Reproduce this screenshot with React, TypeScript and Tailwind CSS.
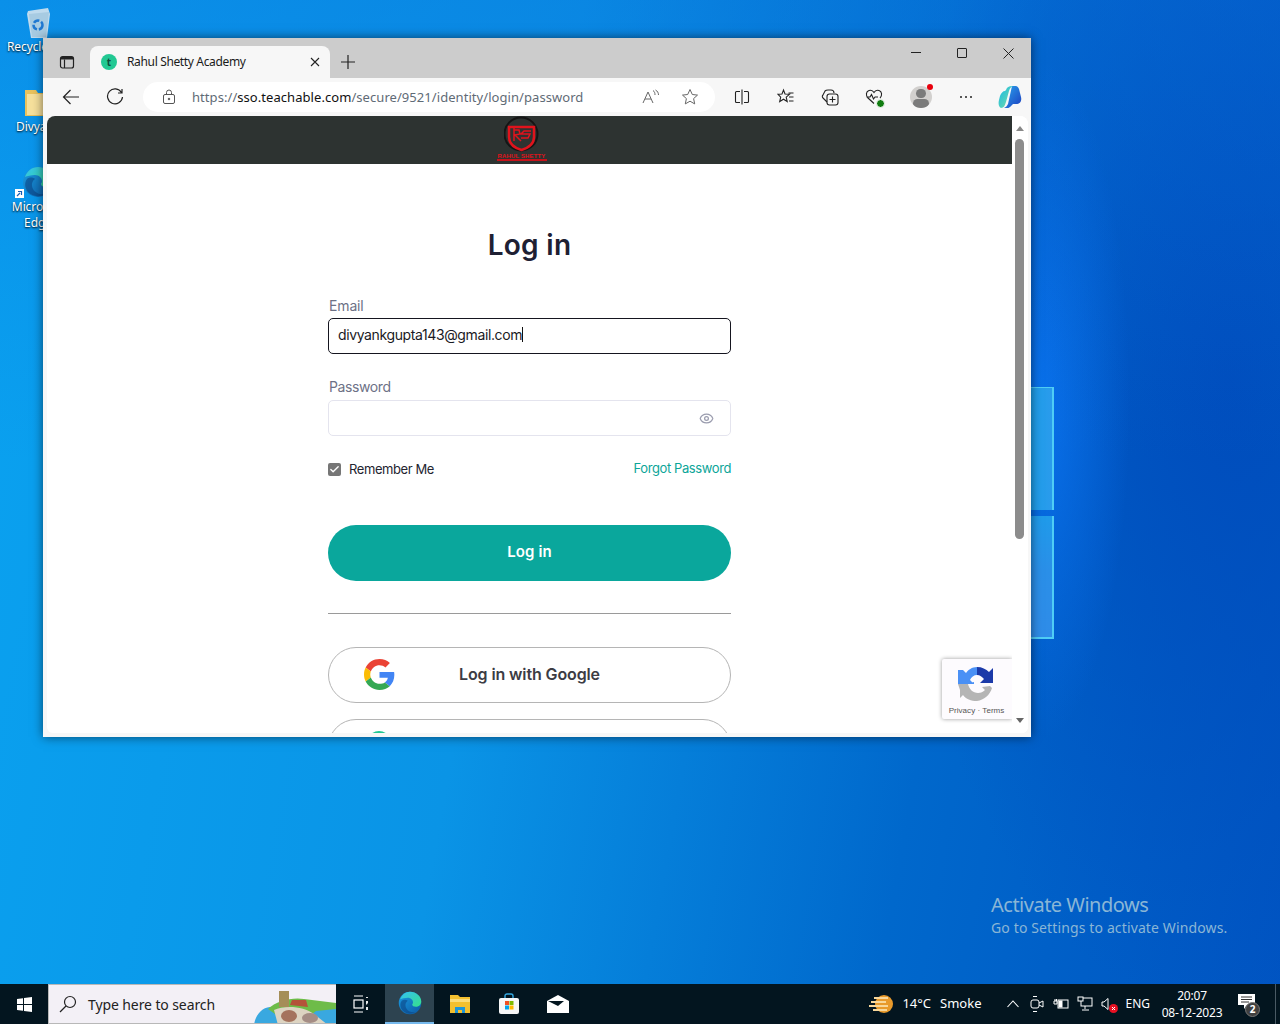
import React from 'react';
import { Eye, Check } from 'lucide-react';

const ui = "font-['Noto_Sans','Open_Sans',sans-serif]";
const form = "font-['Inter','Liberation_Sans',sans-serif]";

const Google = ({ size }: { size: number }) => (
  <svg width={size} height={size} viewBox="0 0 48 48">
    <path fill="#EA4335" d="M24 9.500c3.500 0 6.700 1.200 9.200 3.600l6.900-6.900C35.900 2.400 30.500 0 24 0 14.600 0 6.500 5.400 2.600 13.200l8 6.200C12.500 13.600 17.800 9.500 24 9.500z" />
    <path fill="#4285F4" d="M47 24.500c0-1.600-.1-3.100-.4-4.500H24v9h12.900c-.6 3-2.200 5.500-4.700 7.200l7.700 6C44.400 37.800 47 31.700 47 24.500z" />
    <path fill="#FBBC05" d="M10.500 28.600c-.5-1.400-.8-3-.8-4.600s.3-3.200.8-4.600l-8-6.200C.9 16.500 0 20.100 0 24s.9 7.500 2.600 10.800l7.900-6.200z" />
    <path fill="#34A853" d="M24 48c6.500 0 11.900-2.100 15.900-5.800l-7.700-6c-2.200 1.500-4.900 2.300-8.200 2.300-6.200 0-11.500-4.200-13.400-9.800l-8 6.200C6.500 42.600 14.600 48 24 48z" />
  </svg>
);

const Edge = ({ size, id }: { size: number; id: string }) => (
  <svg width={size} height={size} viewBox="0 0 32 32">
    <defs>
      <linearGradient id={`${id}A`} x1="0" y1="0" x2="1" y2="1">
        <stop offset="0" stopColor="#35c1f1" />
        <stop offset="1" stopColor="#36e08a" />
      </linearGradient>
      <linearGradient id={`${id}B`} x1="0" y1="0" x2="1" y2="1">
        <stop offset="0" stopColor="#1b9de2" />
        <stop offset="1" stopColor="#0c59a4" />
      </linearGradient>
    </defs>
    <circle cx="16" cy="16" r="15" fill={`url(#${id}B)`} />
    <path fill={`url(#${id}A)`} d="M3 11C5 5 10 1 16 1c8 0 15 6 15 13 0 4-3 7-7 7-3 0-5-1-5-3 0-1 1-1 1-3 0-3-3-6-7-6-4 0-8 1-10 2z" />
    <path fill="#0b3f80" d="M13 13c-3 2-4 6-2 10 2 4 7 6 12 5-6 4-13 2-17-2C3 22 2 17 5 13c2-2 6-2 8 0z" opacity=".55" />
  </svg>
);

const DesktopIcon = ({ top, label, children }: { top: number; label: string; children: React.ReactNode }) => (
  <div className="absolute left-[3px] w-[70px] flex flex-col items-center text-white text-[12px] leading-[16px]" style={{ top }}>
    {children}
    <span className={`${ui} text-center tracking-[-0.1px] [text-shadow:0_1px_2px_#000]`}>{label}</span>
  </div>
);

const Desktop = () => (
  <>
    <DesktopIcon top={6} label="Recycle Bin">
      <svg width="30" height="33" viewBox="0 0 30 33">
        <path d="M5 5l20-3 2 6-3 24H8L4 8z" fill="#c9dfee" opacity=".95" />
        <path d="M6 8l20-2-3 25H9z" fill="#a7cbe2" />
        <circle cx="15" cy="19" r="4.500" fill="none" stroke="#1f78d1" strokeWidth="2.500" strokeDasharray="6 2" />
      </svg>
    </DesktopIcon>
    <DesktopIcon top={88} label="Divyank">
      <svg width="32" height="31" viewBox="0 0 32 31">
        <path d="M3 2h11l2 3h13v23H3z" fill="#e9c25d" />
        <path d="M5 6h22v21H5z" fill="#f6e09c" />
      </svg>
    </DesktopIcon>
    <DesktopIcon top={166} label="Microsoft Edge">
      <div className="relative w-[32px] h-[33px]">
        <Edge size={32} id="deskEdge" />
        <svg className="absolute left-[-7px] bottom-[1px]" width="9" height="9" viewBox="0 0 9 9">
          <rect width="9" height="9" fill="#fff" />
          <path d="M2 7l3-3M3 2.500h3.500V6" fill="none" stroke="#1a5fb4" strokeWidth="1.200" />
        </svg>
      </div>
    </DesktopIcon>
  </>
);

const Wallpaper = () => (
  <div className="absolute left-[1031px] top-[387px] w-[23px] h-[252px] flex flex-col gap-[6px]">
    <div className="h-[123px] border-t border-r-2 border-[#4fcdf5] bg-[linear-gradient(90deg,#1e9fea,#2a9bec)]" />
    <div className="h-[123px] border-b-2 border-r-2 border-[#4fcdf5] bg-[linear-gradient(180deg,#1f9bea,#2a8fe8_45%,#2f8ce8)]" />
  </div>
);

const Browser = () => (
  <div className="absolute left-[43px] top-[38px] w-[988px] h-[699px] bg-[#f7f7f7] flex flex-col shadow-[0_0_10px_rgba(0,0,0,0.55)] overflow-hidden">
    {/* tabs */}
    <div className={`${ui} h-[40px] shrink-0 bg-[#cccccc] flex items-end text-[#1a1a1a]`}>
      <div className="w-[47px] h-[32px] flex items-center justify-center">
        <svg width="16" height="16" viewBox="0 0 16 16" fill="none" stroke="#222" strokeWidth="1.200">
          <rect x="1.500" y="2.500" width="13" height="11.500" rx="2" />
          <path d="M5.500 5.500V14" />
          <path d="M2 3h12v2.500H2z" fill="#222" stroke="none" />
        </svg>
      </div>
      <div className="w-[240px] h-[32px] bg-[#f7f7f7] rounded-t-[8px] flex items-center pl-[11px] pr-[10px]">
        <div className="w-[16px] h-[16px] rounded-full bg-[#22c893] text-[10px] text-[#0f4b3a] leading-[16px] text-center font-bold">t</div>
        <span className="ml-[10px] text-[12px] tracking-[-0.35px] flex-1 whitespace-nowrap">Rahul Shetty Academy</span>
        <svg width="10" height="10" viewBox="0 0 10 10" stroke="#222" strokeWidth="1.100"><path d="M1 1l8 8M9 1L1 9" /></svg>
      </div>
      <div className="w-[35px] h-[32px] flex items-center justify-center">
        <svg width="16" height="16" viewBox="0 0 16 16" stroke="#222" strokeWidth="1.200"><path d="M8 1v14M1 8h14" /></svg>
      </div>
      <div className="flex-1" />
      <div className="h-[40px] flex items-start pt-[9px]">
        <div className="w-[46px] flex justify-center pt-[5px]"><div className="w-[10px] h-px bg-[#222]" /></div>
        <div className="w-[46px] flex justify-center pt-[1px]"><div className="w-[10px] h-[10px] border border-[#222] rounded-[1px]" /></div>
        <div className="w-[46px] flex justify-center pt-[1px]">
          <svg width="11" height="11" viewBox="0 0 11 11" stroke="#222" strokeWidth="1"><path d="M.5.5l10 10M10.500.5l-10 10" /></svg>
        </div>
      </div>
    </div>
    {/* toolbar */}
    <div className={`${ui} h-[38px] shrink-0 flex items-center`}>
      <div className="w-[100px] flex items-center justify-between pl-[19px] pr-[19px]">
        <svg width="18" height="18" viewBox="0 0 18 18" fill="none" stroke="#222" strokeWidth="1.200"><path d="M17 9H1.500M8.500 2l-7 7 7 7" /></svg>
        <svg width="18" height="18" viewBox="0 0 18 18" fill="none" stroke="#222" strokeWidth="1.200"><path d="M15.500 4.500A7.500 7.500 0 1 0 16.500 9M16 1v4h-4" /></svg>
      </div>
      <div className="w-[572px] h-[30px] bg-white rounded-full flex items-center pl-[19px] pr-[16px]">
        <svg width="14" height="16" viewBox="0 0 14 16" fill="none" stroke="#555" strokeWidth="1"><rect x="1.500" y="5.500" width="11" height="9" rx="1.500" /><path d="M4.500 5.500V3.500a2.500 2.500 0 0 1 5 0v2" /><circle cx="7" cy="10" r=".8" fill="#555" /></svg>
        <span className="ml-[16px] flex-1 text-[13px] tracking-[0.06px] text-[#5f6b76] whitespace-nowrap pt-[1px]">
          https://<span className="text-[#111]">sso.teachable.com</span>/secure/9521/identity/login/password
        </span>
        <svg width="18" height="16" viewBox="0 0 18 16" fill="none" stroke="#666" strokeWidth="1"><path d="M1 14L6 3l5 11M3 10h6M11 1.500c1.500 1 2 2.500 2 4.500M13.500 1c2 1 3 3 3 5" /></svg>
        <svg className="ml-[21px]" width="18" height="18" viewBox="0 0 18 18" fill="none" stroke="#666" strokeWidth="1"><path d="M9 1.500l2.300 5 5.200.6-3.900 3.500 1.100 5.300L9 13.200 4.300 15.900l1.100-5.300L1.500 7.100l5.200-.6z" /></svg>
      </div>
      <div className="flex-1 flex items-center pl-[19px] pr-[9px] justify-between">
        <svg width="16" height="16" viewBox="0 0 16 16" fill="none" stroke="#222" strokeWidth="1.100"><path d="M6 2.500H2.500a1 1 0 0 0-1 1v9a1 1 0 0 0 1 1H6M10 2.500h3.500a1 1 0 0 1 1 1v9a1 1 0 0 1-1 1H10M8 .5v15" /></svg>
        <svg className="ml-[1px]" width="18" height="18" viewBox="0 0 18 18" fill="none" stroke="#222" strokeWidth="1.100"><path d="M6.500 2l1.500 4 4.500.3-3.300 2.800 1 4.400-3.700-2.300-3.800 2.300 1-4.400L1 6.300 5 6zM11.500 5h5M12 9h4.500M12 13h4.500" /></svg>
        <svg width="18" height="18" viewBox="0 0 18 18" fill="none" stroke="#222" strokeWidth="1.100"><path d="M6 14l-4-4a2 2 0 0 1 0-3l2-4c1-1 2-1 3-1h3c2 0 3 1 3 3" /><rect x="6" y="6" width="11" height="11" rx="2.500" /><path d="M11.500 8.500v6M8.500 11.500h6" /></svg>
        <div className="relative w-[18px] h-[18px]">
          <svg width="18" height="18" viewBox="0 0 18 18" fill="none" stroke="#222" strokeWidth="1.100"><path d="M9 15.500L3 10C.5 7.500 1 3.500 4 2.500c2-.6 4 .3 5 2 1-1.700 3-2.600 5-2 3 1 3.500 5 1 7.500M1.500 9h3.500l1.500-2.500 2 4.500 1.500-2h3" /></svg>
          <div className="absolute right-[-2px] bottom-[-2px] w-[9px] h-[9px] rounded-full bg-[#107c10] border border-white" />
        </div>
        <div className="relative w-[22px] h-[22px]">
          <div className="w-[22px] h-[22px] rounded-full bg-[#d2d0ce] overflow-hidden flex flex-col items-center">
            <div className="w-[10px] h-[10px] mt-[3px] rounded-full bg-[#7b7b7b]" />
            <div className="w-[16px] h-[10px] mt-[1px] rounded-full bg-[#7b7b7b]" />
          </div>
          <div className="absolute right-[-1px] top-[-2px] w-[6px] h-[6px] rounded-full bg-[#e8000d]" />
        </div>
        <div className="flex gap-[3px] ml-[2px]">
          <div className="w-[2px] h-[2px] bg-[#222] rounded-full" />
          <div className="w-[2px] h-[2px] bg-[#222] rounded-full" />
          <div className="w-[2px] h-[2px] bg-[#222] rounded-full" />
        </div>
        <svg width="24" height="24" viewBox="0 0 24 24">
          <defs>
            <linearGradient id="copA" x1="0" y1="0" x2="1" y2="1"><stop offset="0" stopColor="#14b8e8" /><stop offset="1" stopColor="#7ee0a0" /></linearGradient>
            <linearGradient id="copB" x1="0" y1="0" x2="1" y2="1"><stop offset="0" stopColor="#2aa4ee" /><stop offset="1" stopColor="#1c3fc0" /></linearGradient>
          </defs>
          <path fill="url(#copB)" d="M14 1h3c2 0 3 1 4 3l2 8c1 4-1 7-5 7h-3l-3 3c-1 1-2 1-4 1H6c2-1 3-2 4-4z" />
          <path fill="url(#copA)" d="M8 5c1-3 3-4 6-4h1c-2 1-3 2-4 5l-3 11c-1 3-2 6-5 6-2-1-3-4-2-8l1-4c1-3 3-5 5-5z" />
        </svg>
      </div>
    </div>
    {/* page */}
    <div className="flex-1 min-h-0 ml-[4px] mr-[3px] mb-[4px] bg-white rounded-t-[8px] rounded-b-[6px] flex overflow-hidden">
      <div className={`${form} relative flex-1 min-w-0 flex flex-col items-center overflow-hidden`}>
        <div className="h-[48px] w-full shrink-0 bg-[#2d3331] flex justify-center pr-[16px] overflow-hidden">
          <div className="w-[50px] h-[48px] flex flex-col items-center">
            <svg width="36" height="36" viewBox="0 0 36 36" fill="none" className="shrink-0">
              <circle cx="17" cy="18" r="16.500" stroke="#151515" strokeWidth="2" />
              <path d="M5 11h25v10c0 7-6 11-12.500 13C11 32 5 28 5 21z" stroke="#e0131c" strokeWidth="2.500" fill="#2d3331" />
              <path d="M10 11v14M10 14h5l1 4-5 1 6 6M27 15h-7l-3 3h9l-2 4h-7" stroke="#e0131c" strokeWidth="1.500" />
            </svg>
            <span className="font-['Liberation_Sans',sans-serif] text-[6px] leading-[6px] font-bold text-[#e0131c] whitespace-nowrap tracking-[0.15px] mt-[1px]">RAHUL SHETTY</span>
            <div className="w-[50px] h-[2px] shrink-0 bg-[#c5121a]" />
          </div>
        </div>
        <div className="w-[403px] flex flex-col">
          <h1 className="mt-[64px] text-center text-[#1e2033] text-[28px] leading-[34px] font-semibold tracking-[0.3px]">Log in</h1>
          <label className="mt-[35px] pl-px text-[14px] leading-[17px] tracking-[-0.15px] text-[#6d7186]">Email</label>
          <div className="mt-[4px] h-[36px] rounded-[5px] border border-[#15151f] flex items-center pl-[9px] pb-[3px] text-[14px] tracking-[-0.38px] text-[#1a1a24]">
            <span>divyankgupta143@gmail.com</span>
            <span className="w-px h-[15px] bg-[#111]" />
          </div>
          <label className="mt-[24px] pl-px text-[14px] leading-[17px] tracking-[-0.4px] text-[#6d7186]">Password</label>
          <div className="mt-[5px] h-[36px] rounded-[5px] border border-[#e4e4ee] flex items-center justify-end pr-[16px]">
            <Eye size={15} className="text-[#9a9cae]" />
          </div>
          <div className="mt-[24px] flex items-center justify-between">
            <div className="flex items-center gap-[8px]">
              <div className="w-[13px] h-[13px] rounded-[2px] bg-[#767676] flex items-center justify-center">
                <Check size={11} strokeWidth={3} className="text-white" />
              </div>
              <span className="text-[13px] tracking-[-0.42px] text-[#23242f]">Remember Me</span>
            </div>
            <span className="text-[13px] tracking-[-0.4px] text-[#0ca599] -mt-[2px]">Forgot Password</span>
          </div>
          <button className="mt-[45px] h-[56px] rounded-full bg-[#0aa79c] text-white text-[15px] font-semibold tracking-[0.1px]">Log in</button>
          <div className="mt-[32px] h-px bg-[#9a9a9a]" />
          <button className="relative mt-[33px] h-[56px] rounded-full border border-[#b5b5b5] text-[#3c3c44] text-[16px] font-semibold tracking-[-0.12px] flex items-center justify-center pb-[1px]">
            <span className="absolute left-[35px] top-[11px]"><Google size={31} /></span>
            Log in with Google
          </button>
          <div className="relative mt-[16px] h-[56px] shrink-0 rounded-full border border-[#b5b5b5]">
            <div className="absolute left-[38px] top-[11px] w-[24px] h-[24px] rounded-full bg-[#22c893]" />
          </div>
        </div>
        {/* recaptcha badge */}
        <div className="absolute right-0 top-[543px] w-[70px] h-[60px] bg-[#fdfbfe] shadow-[0_0_4px_rgba(0,0,0,0.4)] rounded-l-[2px] flex flex-col items-center pr-[1px]">
          <svg width="38" height="38" viewBox="0 0 38 38" className="mt-[6px]">
            <path fill="#4a90f5" d="M5 5l3 3c2-3 6-6 11-6v8c-3 0-6 2-7 5l3 3H0V5zM0 18h12l4-1v2H0z" />
            <path fill="#1c3aa9" d="M19 2c5 0 9 2 12 5l4-4v15H22l4-4c-2-2-4-4-7-4z" />
            <path fill="#b5b5b5" d="M0 19h10c1 5 5 9 10 9 3 0 5-1 7-3l-3-3 8-1 2 2c-2 7-8 12-15 13-6 0-11-2-14-6l-3 3 0-8z" />
          </svg>
          <span className="text-[8px] leading-[10px] mt-[3px] text-[#555] font-['Liberation_Sans',sans-serif] whitespace-nowrap tracking-[0.05px]">Privacy · Terms</span>
        </div>
      </div>
      {/* scrollbar */}
      <div className="w-[16px] shrink-0 bg-white flex flex-col items-center pt-[10px] pb-[10px] pr-[1px]">
        <div className="w-0 h-0 border-x-[4px] border-x-transparent border-b-[5px] border-b-[#888]" />
        <div className="w-[9px] h-[400px] mt-[8px] rounded-full bg-[#8c8c8c]" />
        <div className="flex-1" />
        <div className="w-0 h-0 border-x-[4px] border-x-transparent border-t-[5px] border-t-[#666]" />
      </div>
    </div>
  </div>
);

const Taskbar = () => (
  <div className={`${ui} h-[40px] shrink-0 bg-[#03151f] flex items-stretch text-white relative`}>
    <div className="w-[48px] flex items-center justify-center">
      <svg width="15" height="15" viewBox="0 0 15 15" fill="#fff"><path d="M0 2.100l6-.9V7H0zM7 1.100L15 0v7H7zM0 8h6v5.800l-6-.9zM7 8h8v7l-8-1.100z" /></svg>
    </div>
    <div className="w-[288px] bg-[#f3f0f6] border-y border-l border-[#b8b8b8] flex items-center pl-[9px] relative overflow-hidden">
      <svg width="20" height="20" viewBox="0 0 20 20" fill="none" stroke="#222" strokeWidth="1.200"><circle cx="12" cy="8" r="5.500" /><path d="M8 12l-6 6" /></svg>
      <span className="ml-[10px] text-[14px] tracking-[-0.1px] text-[#222]">Type here to search</span>
      <svg className="absolute right-0 top-0" width="82" height="40" viewBox="0 0 82 40">
        <path d="M0 40c2-14 12-20 22-18l60-4v22z" fill="#39a8e0" />
        <path d="M14 24c8-8 24-12 36-10l32 4v6l-20 2-10 8H28z" fill="#6ebc49" />
        <path d="M20 25c10-5 30-4 40 4l14 11H24z" fill="#ddd4c2" />
        <rect x="25" y="6" width="10" height="16" fill="#a58e58" />
        <path d="M36 20l2-5h14l2 7z" fill="#b4533a" />
        <ellipse cx="35" cy="31" rx="8" ry="6" fill="#a5735d" />
        <ellipse cx="56" cy="33" rx="8" ry="5" fill="#a58d85" />
      </svg>
    </div>
    <div className="w-[49px] flex items-center justify-center">
      <svg width="16" height="18" viewBox="0 0 16 18" fill="none" stroke="#fff" strokeWidth="1.200"><path d="M1 1h9M1 17h9" /><rect x="1" y="5" width="9" height="8" /><path d="M14 2v1M14 6v2.500h.1M14 12v3" strokeWidth="1.800" /></svg>
    </div>
    <div className="w-[49px] bg-[#2d4350] border-b-[2px] border-[#76b9ed] flex items-center justify-center mr-[1px]">
      <Edge size={24} id="barEdge" />
    </div>
    <div className="w-[50px] flex items-center justify-center">
      <svg width="22" height="18" viewBox="0 0 22 18"><path d="M1 0h8l2 2h10v16H1z" fill="#f4c02f" /><rect x="1" y="4" width="20" height="3" fill="#fbdc7a" /><path d="M6 12h10v6h-3v-3H9v3H6z" fill="#1f96d8" /></svg>
    </div>
    <div className="w-[47px] flex items-center justify-center">
      <svg width="22" height="22" viewBox="0 0 22 22" fill="none"><path d="M7 5V3a2 2 0 0 1 2-2h4a2 2 0 0 1 2 2v2" stroke="#35a8e0" strokeWidth="1.400" /><rect x="1" y="5" width="20" height="16" rx="2" fill="#f7f7f7" /><rect x="7" y="8" width="4" height="4" fill="#f25022" /><rect x="11.500" y="8" width="4" height="4" fill="#7fba00" /><rect x="7" y="12.500" width="4" height="4" fill="#00a4ef" /><rect x="11.500" y="12.500" width="4" height="4" fill="#ffb900" /></svg>
    </div>
    <div className="w-[51px] flex items-center justify-center">
      <svg width="22" height="18" viewBox="0 0 22 18"><path d="M0 6L11 0l11 6v12H0z" fill="#fff" /><path d="M1 6l16 0-6 5z" fill="#03151f" /></svg>
    </div>
    <div className="flex-1" />
    <div className="flex items-center text-[13px]">
      <svg width="24" height="22" viewBox="0 0 24 22"><circle cx="15" cy="11" r="9" fill="#e89a2c" /><path d="M2 9h15M5 5h14M0 13h19M4 17h14" stroke="#f8d79a" strokeWidth="2" /></svg>
      <span className="ml-[9px] whitespace-nowrap">14°C</span>
      <span className="ml-[9px] whitespace-nowrap">Smoke</span>
      <svg className="ml-[26px]" width="12" height="8" viewBox="0 0 12 8" fill="none" stroke="#fff" strokeWidth="1.100"><path d="M.5 7l5.500-6 5.500 6" /></svg>
      <svg className="ml-[11px]" width="14" height="18" viewBox="0 0 14 18" fill="none" stroke="#fff" strokeWidth="1"><rect x="1" y="5" width="8" height="8" rx="2" /><path d="M9 8l4-2v6l-4-2M3 1.500h4M3 16.500h4" /></svg>
      <svg className="ml-[9px]" width="16" height="12" viewBox="0 0 16 12" fill="none" stroke="#fff" strokeWidth="1"><rect x="5" y="2" width="10" height="8" /><path d="M1 3v3h3V3zM2 1v2M3.500 1v2" /><rect x="6" y="3" width="3" height="6" fill="#fff" /></svg>
      <svg className="ml-[8px]" width="16" height="16" viewBox="0 0 16 16" fill="none" stroke="#fff" strokeWidth="1"><rect x="4" y="2" width="11" height="8" /><rect x="1" y="1" width="5" height="4" fill="#03151f" /><path d="M8 10v3M5 14h7" /></svg>
      <div className="relative ml-[8px] w-[16px] h-[14px]">
        <svg width="9" height="14" viewBox="0 0 9 14" fill="none" stroke="#fff" strokeWidth="1"><path d="M1 5v4h2l4 3.500v-11L3 5z" /></svg>
        <svg className="absolute right-[-1px] bottom-[-2px]" width="9" height="9" viewBox="0 0 9 9">
          <circle cx="4.500" cy="4.500" r="4.500" fill="#e81123" />
          <path d="M3 3l3 3M6 3L3 6" stroke="#fff" strokeWidth="1" />
        </svg>
      </div>
      <span className="ml-[8px] text-[12px]">ENG</span>
      <div className="ml-[11px] w-[62px] text-[12px] leading-[17px] text-center tracking-[-0.2px] -mt-[1px]">
        <div>20:07</div>
        <div>08-12-2023</div>
      </div>
      <div className="relative ml-[15px] w-[20px] h-[20px]">
        <svg width="17" height="15" viewBox="0 0 17 15"><path d="M0 0h17v11H9l-3 4v-4H0z" fill="#fff" /><path d="M3 3h11M3 5.500h11M3 8h8" stroke="#333" /></svg>
        <div className="absolute right-[-2px] bottom-[-3px] w-[15px] h-[15px] rounded-full bg-[#404040] border border-[#777] text-[10px] leading-[13px] text-center font-bold">2</div>
      </div>
      <div className="ml-[17px] w-[1px] h-[40px] bg-[#4a5a64]" />
      <div className="w-[4px]" />
    </div>
  </div>
);

export default function App() {
  return (
    <div className="relative w-[1280px] h-[1024px] overflow-hidden flex flex-col bg-[linear-gradient(100deg,#0aa2f0_0%,#0a94e6_40%,#0068cc_72%,#0054c2_100%)]">
      <div className="absolute inset-0 bg-[radial-gradient(ellipse_340px_640px_at_1230px_380px,rgba(0,76,188,0.95)_0%,rgba(0,76,188,0)_100%)]" />
      <div className="absolute inset-0 bg-[radial-gradient(ellipse_90px_340px_at_1040px_400px,rgba(10,115,240,0.9)_0%,rgba(10,110,230,0)_100%)]" />
      <div className="absolute inset-0 bg-[linear-gradient(180deg,rgba(10,110,220,0.35)_0%,rgba(10,110,220,0)_45%)]" />
      <div className="relative flex-1 min-h-0">
        <Desktop />
        <Wallpaper />
        <Browser />
        <div className={`${ui} absolute left-[991px] top-[893px] text-[#8ab6d6]`}>
          <div className="text-[20px] leading-[24px] tracking-[-0.5px]">Activate Windows</div>
          <div className="text-[14px] leading-[21px] tracking-[0.13px]">Go to Settings to activate Windows.</div>
        </div>
      </div>
      <Taskbar />
    </div>
  );
}
